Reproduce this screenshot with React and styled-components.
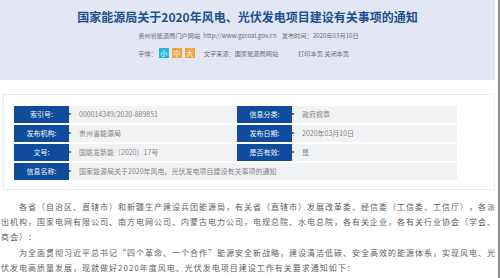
import React from 'react';
import styled, { createGlobalStyle } from 'styled-components';

const GlobalStyle = createGlobalStyle`
  html, body {
    margin: 0;
    padding: 0;
    background: #ffffff;
  }
  body {
    font-family: 'Noto Sans CJK SC', 'Liberation Sans', sans-serif;
    text-spacing-trim: space-all;
  }
`;

const Page = styled.div`
  width: 500px;
  height: 278px;
  overflow: hidden;
  box-sizing: border-box;
  border-right: 2px solid #8c8c8c;
  background: #fff;
`;

const HeaderBand = styled.header`
  width: 495px;
  height: 80px;
  box-sizing: border-box;
  padding-top: 9px;
  background: #e3e7f3;
  display: flex;
  flex-direction: column;
  align-items: center;
`;

const Title = styled.h1`
  margin: 0;
  font-size: 12px;
  line-height: 15px;
  font-weight: bold;
  color: #1c4f91;
  white-space: nowrap;
`;

const MetaBlock = styled.div`
  display: flex;
  flex-direction: column;
  align-items: flex-start;
  margin-top: 6px;
  margin-left: 2px;
`;

const MetaRow = styled.div`
  display: flex;
  align-items: center;
  height: ${p => p.tall ? 12 : 10}px;
  margin-top: ${p => p.gap || 0}px;
  font-size: 6.2px;
  color: #6f6f6f;
  white-space: nowrap;
`;

const MetaItem = styled.span`
  margin-left: ${p => p.lead || 0}px;
  margin-right: ${p => p.space || 0}px;
`;

const SizeButton = styled.span`
  display: inline-block;
  width: 10px;
  height: 10px;
  line-height: 10px;
  text-align: center;
  font-size: 7px;
  color: #fff;
  background: ${p => p.active ? '#2bb3dc' : '#f2a441'};
  margin-right: 3px;
`;

const InfoCard = styled.section`
  margin: 14px 0 0 3px;
  width: 492px;
  height: 96px;
  box-sizing: border-box;
  border: 1px solid #ebebeb;
  padding: 11px 0 0 10px;
  display: flex;
  flex-direction: column;
  gap: 2px;
`;

const InfoRow = styled.div`
  display: flex;
  height: 17px;
`;

const Label = styled.div`
  position: relative;
  width: 55px;
  flex-shrink: 0;
  background: #0f4d9c;
  color: #f4f6fb;
  font-size: 7px;
  line-height: 17px;
  text-align: center;

  &::after {
    content: '';
    position: absolute;
    right: -3px;
    top: 7px;
    border-left: 3px solid #2b3f5c;
    border-top: 1.5px solid transparent;
    border-bottom: 1.5px solid transparent;
  }
`;

const Value = styled.div`
  width: ${p => p.w}px;
  flex-shrink: 0;
  box-sizing: border-box;
  padding-left: 10px;
  background: #f1f2f4;
  color: #858585;
  font-size: 7px;
  line-height: 17px;
  white-space: nowrap;
  overflow: hidden;
`;

const Article = styled.div`
  margin-top: 9px;
  padding-left: 1px;
  width: 495px;
  font-size: 8px;
  letter-spacing: 1px;
  line-height: 15.2px;
  color: #606060;
`;

const Line = styled.div`
  padding-left: ${p => p.indent ? 18 : 0}px;
  white-space: nowrap;
`;

const Quote = styled.span`
  font-feature-settings: "fwid";
`;

const rows = [
  ['索引号:', '000014349/2020-889851', '信息分类:', '政府规章'],
  ['发布机构:', '贵州省能源局', '发布日期:', '2020年03月10日'],
  ['文号:', '国能发新能〔2020〕17号', '是否有效:', '是'],
];

export default function App() {
  return (
    <Page lang="zh-CN">
      <GlobalStyle />
      <HeaderBand>
        <Title>国家能源局关于2020年风电、光伏发电项目建设有关事项的通知</Title>
        <MetaBlock>
          <MetaRow>
            <MetaItem space={3}>贵州省能源局门户网站</MetaItem>
            <MetaItem space={5}>http://www.gzcoal.gov.cn</MetaItem>
            <MetaItem>发布时间：2020年03月10日</MetaItem>
          </MetaRow>
          <MetaRow tall gap={7}>
            <MetaItem space={2}>字体：</MetaItem>
            <SizeButton active>小</SizeButton>
            <SizeButton>中</SizeButton>
            <SizeButton>大</SizeButton>
            <MetaItem lead={6} space={20}>文字来源：国家能源局网站</MetaItem>
            <MetaItem>打印本页 关闭本页</MetaItem>
          </MetaRow>
        </MetaBlock>
      </HeaderBand>

      <InfoCard>
        {rows.map(r => (
          <InfoRow key={r[0]}>
            <Label>{r[0]}</Label>
            <Value w={168}>{r[1]}</Value>
            <Label>{r[2]}</Label>
            <Value w={165}>{r[3]}</Value>
          </InfoRow>
        ))}
        <InfoRow>
          <Label>信息名称:</Label>
          <Value w={388}>国家能源局关于2020年风电、光伏发电项目建设有关事项的通知</Value>
        </InfoRow>
      </InfoCard>

      <Article>
        <Line indent>各省（自治区、直辖市）和新疆生产建设兵团能源局，有关省（直辖市）发展改革委、经信委（工信委、工信厅），各派</Line>
        <Line>出机构，国家电网有限公司、南方电网公司、内蒙古电力公司，电规总院、水电总院，各有关企业，各有关行业协会（学会、</Line>
        <Line>商会）：</Line>
        <Line indent>为全面贯彻习近平总书记<Quote>“</Quote>四个革命、一个合作<Quote>”</Quote>能源安全新战略，建设清洁低碳、安全高效的能源体系，实现风电、光</Line>
        <Line>伏发电高质量发展，现就做好2020年度风电、光伏发电项目建设工作有关要求通知如下：</Line>
      </Article>
    </Page>
  );
}
